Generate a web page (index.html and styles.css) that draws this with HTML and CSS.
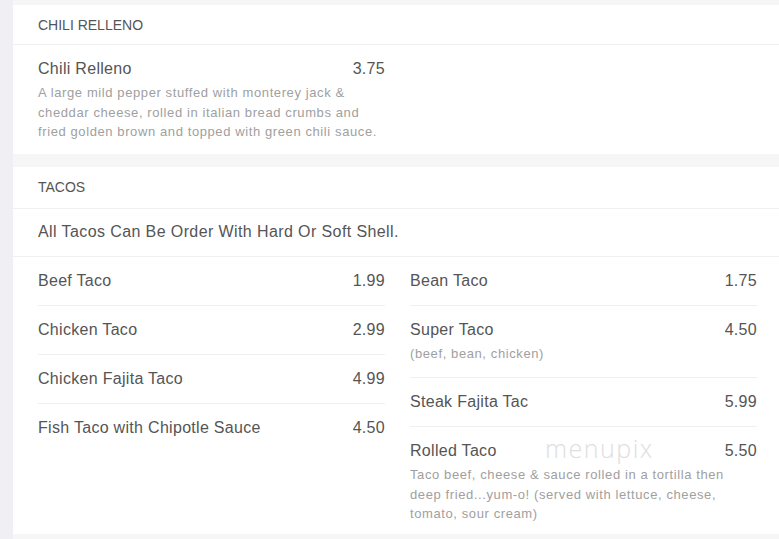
FILE: index.html
```html
<!DOCTYPE html>
<html>
<head>
<meta charset="utf-8">
<link rel="stylesheet" href="styles.css">
</head>
<body>
<div class="page">
  <div class="rail"></div>
  <main class="main">
    <section class="card">
      <div class="card-head">CHILI RELLENO</div>
      <div class="grid grid-single">
        <div class="col">
          <div class="item">
            <div class="item-top"><span class="name">Chili Relleno</span><span class="price">3.75</span></div>
            <div class="desc">A large mild pepper stuffed with monterey jack &amp; cheddar cheese, rolled in italian bread crumbs and fried golden brown and topped with green chili sauce.</div>
          </div>
        </div>
      </div>
    </section>
    <section class="card card-tacos">
      <div class="card-head">TACOS</div>
      <div class="note">All Tacos Can Be Order With Hard Or Soft Shell.</div>
      <div class="grid">
        <div class="col">
          <div class="item"><div class="item-top"><span class="name">Beef Taco</span><span class="price">1.99</span></div></div>
          <div class="item"><div class="item-top"><span class="name">Chicken Taco</span><span class="price">2.99</span></div></div>
          <div class="item"><div class="item-top"><span class="name">Chicken Fajita Taco</span><span class="price">4.99</span></div></div>
          <div class="item"><div class="item-top"><span class="name">Fish Taco with Chipotle Sauce</span><span class="price">4.50</span></div></div>
        </div>
        <div class="col">
          <div class="item"><div class="item-top"><span class="name">Bean Taco</span><span class="price">1.75</span></div></div>
          <div class="item">
            <div class="item-top"><span class="name">Super Taco</span><span class="price">4.50</span></div>
            <div class="desc">(beef, bean, chicken)</div>
          </div>
          <div class="item"><div class="item-top"><span class="name">Steak Fajita Tac</span><span class="price">5.99</span></div></div>
          <div class="item item-last">
            <div class="item-top"><span class="name">Rolled Taco</span><span class="price">5.50</span></div>
            <div class="desc">Taco beef, cheese &amp; sauce rolled in a tortilla then deep fried...yum-o! (served with lettuce, cheese, tomato, sour cream)</div>
          </div>
        </div>
      </div>
      <div class="watermark">menupix</div>
    </section>
  </main>
</div>
</body>
</html>
```
FILE: styles.css
```css
html, body {
  margin: 0;
  padding: 0;
}
body {
  font-family: "Liberation Sans", Arial, sans-serif;
  color: #555;
  background: #f6f6f6;
}
.page {
  display: flex;
  min-height: 539px;
  overflow: hidden;
}
.rail {
  width: 13px;
  flex: none;
  background: #efeff4;
}
.main {
  flex: 1;
  padding-top: 5px;
  background: #f6f6f6;
}
.card {
  background: #fff;
  margin-bottom: 13px;
}
.card-tacos {
  position: relative;
  margin-top: 1px;
}
.card-head {
  height: 39px;
  padding: 0 25px;
  display: flex;
  align-items: center;
  font-size: 14px;
  color: #555;
  border-bottom: 1px solid #f0f0f0;
}
.card-tacos .card-head {
  height: 41px;
}
.note {
  height: 47px;
  padding: 0 25px;
  display: flex;
  align-items: center;
  font-size: 16px;
  letter-spacing: 0.4px;
  border-bottom: 1px solid #f0f0f0;
}
.grid {
  display: grid;
  grid-template-columns: 347px 347px;
  column-gap: 25px;
  padding: 0 25px;
}
.item {
  padding: 14px 0;
}
.grid-single .item {
  padding: 14px 0 12px;
}
.item-last {
  padding-bottom: 10px;
}
.col .item + .item {
  border-top: 1px solid #f0f0f0;
}
.item-top {
  display: flex;
  justify-content: space-between;
  line-height: 20px;
  font-size: 16px;
  letter-spacing: 0.3px;
  color: #555;
}
.desc {
  margin-top: 4px;
  font-size: 13px;
  line-height: 19.5px;
  letter-spacing: 0.6px;
  color: #a0a0a0;
}
.watermark {
  position: absolute;
  left: 532px;
  top: 264px;
  font-family: "Open Sans", sans-serif;
  font-weight: 300;
  font-size: 25px;
  letter-spacing: 1.5px;
  color: #dedede;
  pointer-events: none;
}
```
